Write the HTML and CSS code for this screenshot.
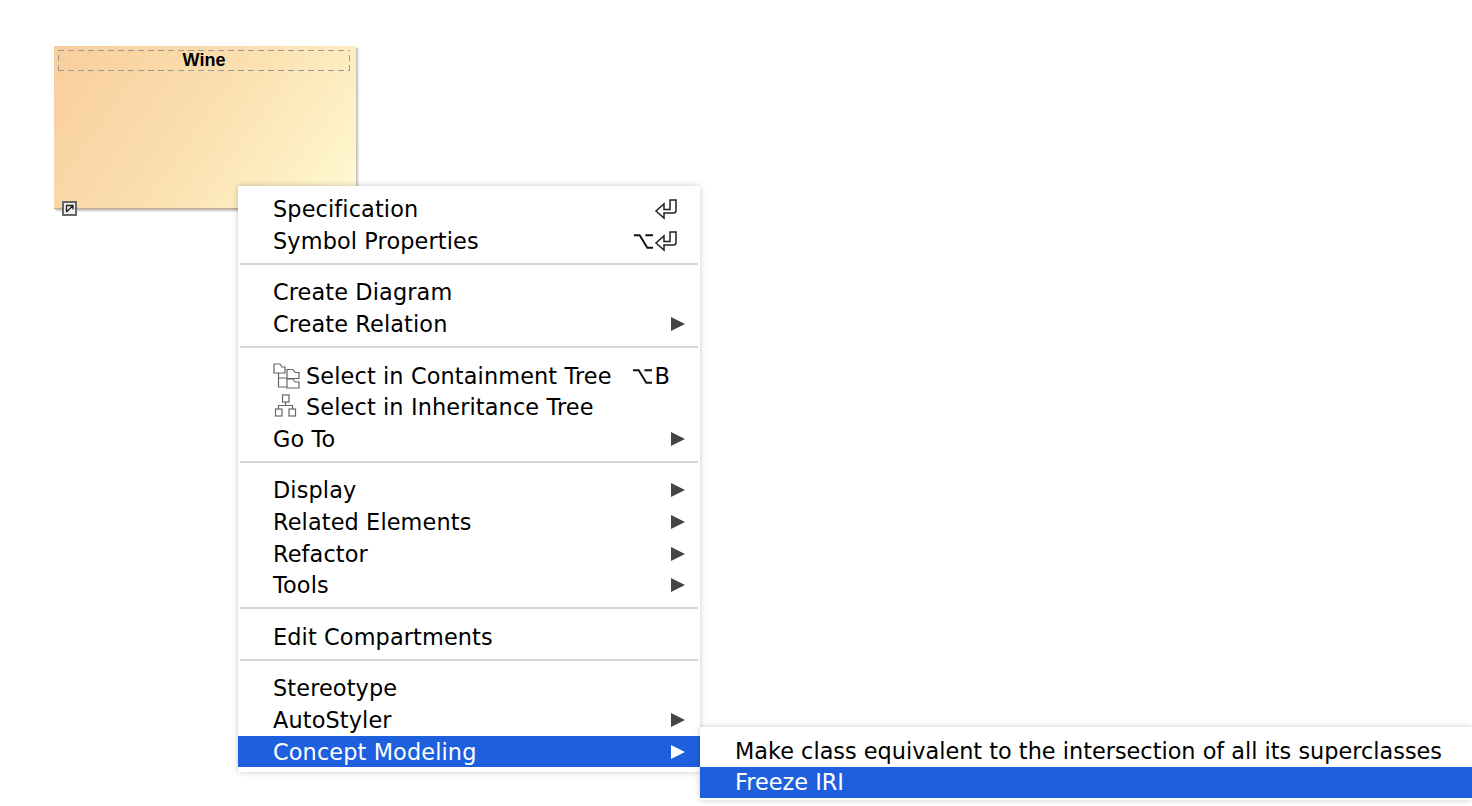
FILE: index.html
```html
<!DOCTYPE html>
<html lang="en">
<head>
    <meta charset="UTF-8">
    <title>Concept Modeling menu</title>
    <link rel="stylesheet" href="styles.css">
</head>
<body>
    <svg class="defs" width="0" height="0">
        <symbol id="ret" viewBox="0 0 24 22">
            <path d="M22 2h-6v9.500H10V6L2 13l8 7v-5h9.500q2.500 0 2.500-2.500z" fill="none" stroke="#222" stroke-width="1.500"/>
        </symbol>
        <symbol id="opt" viewBox="0 0 22 18">
            <path d="M1 3h6l8 13h6M13 3h8" fill="none" stroke="#111" stroke-width="2"/>
        </symbol>
        <symbol id="sub" viewBox="0 0 14 14">
            <path d="M0 0l14 7-14 7z" fill="currentColor"/>
        </symbol>
    </svg>

    <div class="wine">
        <div class="wine-title">Wine</div>
        <div class="wine-link">
            <svg width="11" height="11" viewBox="0 0 11 11"><path d="M2.500 9V2.500H9M2.500 9L8.500 3M5 2.500h4v4" fill="none" stroke="#222" stroke-width="1.300"/></svg>
        </div>
    </div>

    <div class="menu">
        <div class="item"><span class="label">Specification</span><svg class="key-ret"><use href="#ret"/></svg></div>
        <div class="item"><span class="label">Symbol Properties</span><svg class="key-opt"><use href="#opt"/></svg><svg class="key-ret"><use href="#ret"/></svg></div>
        <div class="sep"></div>
        <div class="item"><span class="label">Create Diagram</span></div>
        <div class="item"><span class="label">Create Relation</span><svg class="arrow"><use href="#sub"/></svg></div>
        <div class="sep"></div>
        <div class="item">
            <svg class="tree-icon" viewBox="0 0 28 26">
                <g fill="#fff" stroke="#666" stroke-width="1.200">
                    <path d="M5.500 10v14H14M5.500 15H14" fill="none"/>
                    <path d="M1 1h6l2 3h3v6H1z"/>
                    <path d="M14 6.500h6l2 3h4v6H14z"/>
                    <path d="M14 16h6l2 3h4v6H14z"/>
                </g>
            </svg>
            <span class="label">Select in Containment Tree</span>
            <svg class="key-opt opt-b"><use href="#opt"/></svg><span class="key">B</span>
        </div>
        <div class="item">
            <svg class="tree-icon" viewBox="0 0 28 26">
                <g fill="#fff" stroke="#666" stroke-width="1.200">
                    <rect x="9.500" y="1" width="6.500" height="7"/>
                    <rect x="2.500" y="15" width="6.500" height="7"/>
                    <rect x="16" y="15" width="6.500" height="7"/>
                    <path d="M12.500 8v3.500M5.500 15v-3.500h14V15" fill="none"/>
                </g>
            </svg>
            <span class="label">Select in Inheritance Tree</span>
        </div>
        <div class="item"><span class="label">Go To</span><svg class="arrow"><use href="#sub"/></svg></div>
        <div class="sep"></div>
        <div class="item"><span class="label">Display</span><svg class="arrow"><use href="#sub"/></svg></div>
        <div class="item"><span class="label">Related Elements</span><svg class="arrow"><use href="#sub"/></svg></div>
        <div class="item"><span class="label">Refactor</span><svg class="arrow"><use href="#sub"/></svg></div>
        <div class="item"><span class="label">Tools</span><svg class="arrow"><use href="#sub"/></svg></div>
        <div class="sep"></div>
        <div class="item"><span class="label">Edit Compartments</span></div>
        <div class="sep"></div>
        <div class="item"><span class="label">Stereotype</span></div>
        <div class="item"><span class="label">AutoStyler</span><svg class="arrow"><use href="#sub"/></svg></div>
        <div class="item active"><span class="label">Concept Modeling</span><svg class="arrow"><use href="#sub"/></svg></div>
    </div>

    <div class="menu submenu">
        <div class="item"><span class="label">Make class equivalent to the intersection of all its superclasses</span></div>
        <div class="item active"><span class="label">Freeze IRI</span></div>
    </div>
</body>
</html>
```

FILE: styles.css
```css
html, body {
    margin: 0;
    height: 806px;
    overflow: hidden;
    background: white;
}

body {
    padding: 46px 0 0 54px;
    box-sizing: border-box;
    font-family: "DejaVu Sans", sans-serif;
}

.defs {
    display: block;
    height: 0;
}

/* class symbol on the diagram */
.wine {
    position: relative;
    width: 302px;
    height: 163px;
    box-sizing: border-box;
    padding: 4px 6px 0 4px;
    background: linear-gradient(125deg, #f9cd9c 0%, #fbe0b0 50%, #fffad3 100%);
    border-bottom: 1px solid #c9a784;
    box-shadow: 2px 2px 2px rgba(0,0,0,0.25);
}

.wine-title {
    height: 21px;
    background:
        repeating-linear-gradient(90deg, #999 0 6px, transparent 6px 10px) top / 100% 1px no-repeat,
        repeating-linear-gradient(90deg, #999 0 6px, transparent 6px 10px) bottom / 100% 1px no-repeat,
        repeating-linear-gradient(0deg, #999 0 6px, transparent 6px 10px) left / 1px 100% no-repeat,
        repeating-linear-gradient(0deg, #999 0 6px, transparent 6px 10px) right / 1px 100% no-repeat;
    font-family: "Liberation Sans", sans-serif;
    font-size: 18px;
    font-weight: bold;
    line-height: 20px;
    text-align: center;
    color: black;
}

.wine-link {
    position: absolute;
    left: 8px;
    bottom: -8px;
    width: 11px;
    height: 11px;
    border: 2px solid #666;
    background: #eee;
    display: flex;
}

/* context menus */
.menu {
    position: absolute;
    left: 238px;
    top: 186px;
    width: 462px;
    box-sizing: border-box;
    padding: 7.500px 0 5px;
    background: white;
    box-shadow: 0 0 6px rgba(0,0,0,0.22);
    letter-spacing: 0.120px;
}

.submenu {
    left: 700px;
    top: 727px;
    width: 772px;
    padding: 8px 0 2px;
    letter-spacing: 0;
}

.item {
    display: flex;
    align-items: center;
    height: 31.600px;
    padding: 0 22px 0 35px;
    font-size: 22.400px;
    color: #000;
    white-space: nowrap;
}

.label {
    flex: 1;
}

.tree-icon {
    width: 28px;
    height: 26px;
    margin-right: 5px;
}

.key {
    margin-right: 8px;
}

.key-ret {
    width: 24px;
    height: 22px;
}

.key-opt {
    width: 21px;
    height: 18px;
}

.opt-b {
    margin-right: 2px;
}

.arrow {
    width: 14px;
    height: 14px;
    margin-right: -7px;
    color: #444;
}

.item.active {
    background: #1d5fdc;
    color: white;
}

.item.active .arrow {
    color: white;
}

.sep {
    height: 2px;
    margin: 6px 2px 12px;
    background: #d6d6d6;
}
```
